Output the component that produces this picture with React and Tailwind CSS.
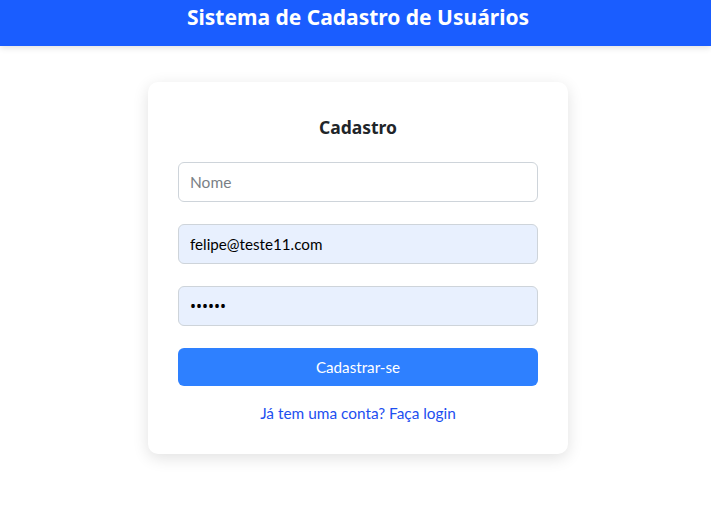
export default function App() {
  return (
    <div className="min-h-screen bg-white pl-[5px] font-['Lato',sans-serif]">
      <header className="-ml-[5px] h-[46px] bg-[#1a5dff] text-white text-center pl-[5px] shadow-[0_2px_6px_rgba(0,0,0,0.12)]">
        <h1 className="font-['Noto_Sans',sans-serif] text-[21px] font-bold leading-[34px]">Sistema de Cadastro de Usuários</h1>
      </header>

      <div className="flex justify-center pt-[36px]">
        <div className="w-[420px] bg-white rounded-[10px] shadow-[0_4px_16px_rgba(0,0,0,0.12)] px-[30px] pt-[33px] pb-[30px]">
          <h2 className="font-['Noto_Sans',sans-serif] text-center text-[17.5px] font-bold text-[#212529] leading-[24px] mb-[23px]">Cadastro</h2>
          <form className="flex flex-col">
            <input
              type="text"
              placeholder="Nome"
              className="h-[40px] w-full border border-[#ced4da] rounded-[6px] px-[11px] text-[15.5px] text-black placeholder:text-[#7a7f86] outline-none mb-[22px]"
            />
            <input
              type="email"
              defaultValue="felipe@teste11.com"
              className="h-[40px] w-full border border-[#ced4da] bg-[#e8f0fe] rounded-[6px] px-[11px] text-[15.2px] text-black outline-none mb-[22px]"
            />
            <input
              type="password"
              defaultValue="123456"
              className="h-[40px] w-full border border-[#ced4da] bg-[#e8f0fe] rounded-[6px] px-[11px] font-['Noto_Sans',sans-serif] text-[16px] text-black outline-none mb-[22px]"
            />
            <button type="button" className="h-[38px] w-full bg-[#2e80ff] text-white text-[15.2px] rounded-[6px]">
              Cadastrar-se
            </button>
          </form>
          <p className="text-center mt-[16px] leading-[22px]">
            <a href="#" className="text-[#1d4ff0] text-[15.4px]">Já tem uma conta? Faça login</a>
          </p>
        </div>
      </div>
    </div>
  );
}
